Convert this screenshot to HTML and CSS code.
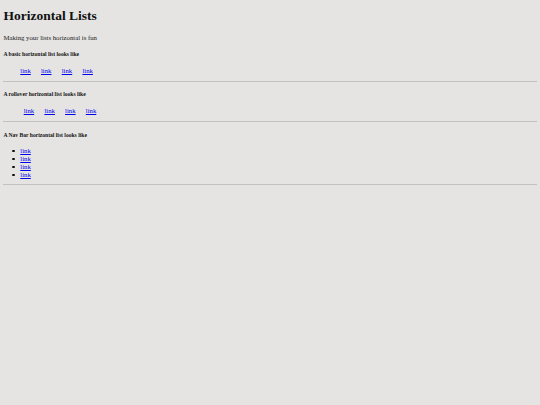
FILE: index.html
```html
<!DOCTYPE html>
<html>
<head>
<meta charset="utf-8">
<title>Horizontal Lists</title>
<link rel="stylesheet" href="styles.css">
</head>
<body>
<h1 class="title">Horizontal Lists</h1>
<p class="intro">Making your lists horizontal is fun</p>

<h5 class="label">A basic horizontal list looks like</h5>
<ul class="list list-basic">
  <li><a href="#">link</a></li>
  <li><a href="#">link</a></li>
  <li><a href="#">link</a></li>
  <li><a href="#">link</a></li>
</ul>
<hr class="rule">

<h5 class="label">A rollover horizontal list looks like</h5>
<ul class="list list-rollover">
  <li><a href="#">link</a></li>
  <li><a href="#">link</a></li>
  <li><a href="#">link</a></li>
  <li><a href="#">link</a></li>
</ul>
<hr class="rule">

<h5 class="label">A Nav Bar horizontal list looks like</h5>
<ul class="list list-nav">
  <li><a href="#">link</a></li>
  <li><a href="#">link</a></li>
  <li><a href="#">link</a></li>
  <li><a href="#">link</a></li>
</ul>
<hr class="rule">
</body>
</html>
```

FILE: styles.css
```css
html {
  background: #e5e4e2;
}

body {
  margin: 0;
  padding: 0 3.4px 3.4px;
  font-family: "Liberation Serif", "Times New Roman", serif;
  font-size: 6.75px;
  line-height: 7.76px;
  color: #000;
}

.title {
  font-size: 13.5px;
  line-height: 15.5px;
  font-weight: bold;
  margin: 7.6px 0 10.7px;
  color: #111;
}

.intro {
  margin: 6.75px 0;
  color: #222;
}

.label {
  font-size: 5.6px;
  line-height: 6.44px;
  font-weight: bold;
  margin: 9.37px 0;
  color: #111;
}

.list {
  margin: 6.75px 0;
  padding-left: 16.9px;
}

.list li {
  line-height: 7.76px;
}

.list a {
  color: #0000ee;
  text-decoration: underline;
}

.list-basic,
.list-rollover {
  list-style: none;
  display: flex;
  gap: 10.2px;
}

.list-basic {
  margin-top: 5.9px;
  margin-bottom: 6.1px;
}

.list-rollover {
  padding-left: 20.3px;
}

.list-nav {
  list-style: none;
  margin-bottom: 5.9px;
}

.list-nav li::before {
  content: "";
  display: inline-block;
  width: 2.2px;
  height: 2.2px;
  border-radius: 50%;
  background: #111;
  margin-left: -7.8px;
  margin-right: 5.6px;
  vertical-align: 1px;
}

.rule {
  margin: 3.4px 0;
  border: 0;
  border-top: 1px solid #c2c1bf;
  height: 0;
}
```
